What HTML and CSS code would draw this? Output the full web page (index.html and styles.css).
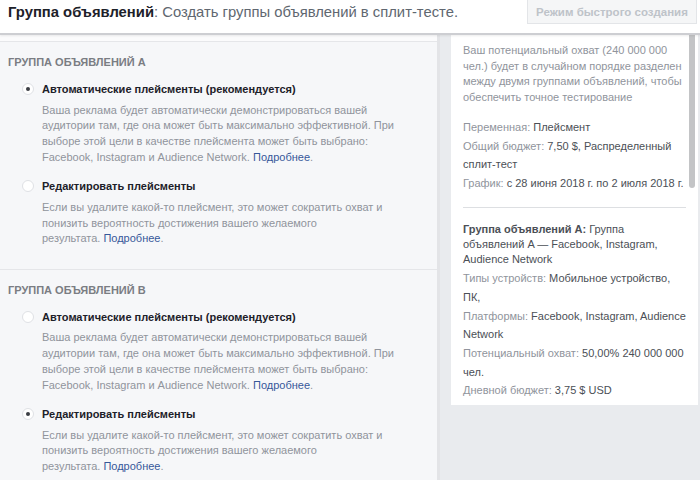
FILE: index.html
```html
<!DOCTYPE html>
<html lang="ru">
<head>
<meta charset="utf-8">
<link rel="stylesheet" href="styles.css">
</head>
<body>
<div class="page">
  <header class="topbar">
    <div class="title"><b>Группа объявлений</b>: Создать группы объявлений в сплит-тесте.</div>
    <button class="quick">Режим быстрого создания</button>
  </header>
  <div class="main">
    <div class="left">
      <div class="prev"></div>
      <section class="group">
        <h3 class="group-title">Группа объявлений A</h3>
        <div class="option">
          <span class="radio checked"></span>
          <div class="opt-body">
            <div class="opt-label">Автоматические плейсменты (рекомендуется)</div>
            <p class="opt-desc">Ваша реклама будет автоматически демонстрироваться вашей<br>аудитории там, где она может быть максимально эффективной. При<br>выборе этой цели в качестве плейсмента может быть выбрано:<br>Facebook, Instagram и Audience Network. <a class="link">Подробнее</a>.</p>
          </div>
        </div>
        <div class="option">
          <span class="radio"></span>
          <div class="opt-body">
            <div class="opt-label">Редактировать плейсменты</div>
            <p class="opt-desc">Если вы удалите какой-то плейсмент, это может сократить охват и<br>понизить вероятность достижения вашего желаемого<br>результата. <a class="link">Подробнее</a>.</p>
          </div>
        </div>
      </section>
      <section class="group">
        <h3 class="group-title">Группа объявлений B</h3>
        <div class="option">
          <span class="radio"></span>
          <div class="opt-body">
            <div class="opt-label">Автоматические плейсменты (рекомендуется)</div>
            <p class="opt-desc">Ваша реклама будет автоматически демонстрироваться вашей<br>аудитории там, где она может быть максимально эффективной. При<br>выборе этой цели в качестве плейсмента может быть выбрано:<br>Facebook, Instagram и Audience Network. <a class="link">Подробнее</a>.</p>
          </div>
        </div>
        <div class="option">
          <span class="radio checked"></span>
          <div class="opt-body">
            <div class="opt-label">Редактировать плейсменты</div>
            <p class="opt-desc">Если вы удалите какой-то плейсмент, это может сократить охват и<br>понизить вероятность достижения вашего желаемого<br>результата. <a class="link">Подробнее</a>.</p>
          </div>
        </div>
      </section>
    </div>
    <aside class="right">
      <div class="card">
        <div class="thumb"></div>
        <p class="intro">Ваш потенциальный охват (240 000 000<br>чел.) будет в случайном порядке разделен<br>между двумя группами объявлений, чтобы<br>обеспечить точное тестирование</p>
        <div class="rows">
          <div><span class="k">Переменная:</span> Плейсмент</div>
          <div><span class="k">Общий бюджет:</span> 7,50 $, Распределенный<br>сплит-тест</div>
          <div><span class="k">График:</span> с 28 июня 2018 г. по 2 июля 2018 г.</div>
        </div>
        <hr class="sep">
        <p class="grp"><b>Группа объявлений A:</b> Группа<br>объявлений A — Facebook, Instagram,<br>Audience Network</p>
        <div class="rows rows2">
          <div><span class="k">Типы устройств:</span> Мобильное устройство,<br>ПК,</div>
          <div><span class="k">Платформы:</span> Facebook, Instagram, Audience<br>Network</div>
          <div><span class="k">Потенциальный охват:</span> 50,00% 240 000 000<br>чел.</div>
          <div><span class="k">Дневной бюджет:</span> 3,75 $ USD</div>
        </div>
      </div>
    </aside>
  </div>
</div>
</body>
</html>
```
FILE: styles.css
```css
* { box-sizing: border-box; }
html, body { margin: 0; padding: 0; }
body {
  font-family: "Liberation Sans", Arial, sans-serif;
  font-size: 11px;
  color: #1d2129;
  background: #fff;
}
.page { width: 700px; height: 480px; overflow: hidden; display: flex; flex-direction: column; }

.topbar {
  height: 35px;
  flex: none;
  display: flex;
  align-items: flex-start;
  justify-content: space-between;
  background: #fff;
  border-bottom: 2px solid #cdced2;
  box-shadow: 0 1px 2px rgba(0,0,0,0.08);
  position: relative;
  z-index: 2;
}
.title {
  padding: 2px 0 0 8px;
  font-size: 14.8px;
  line-height: 20px;
  color: #606770;
}
.title b { color: #1d2129; }
.quick {
  margin: 0 3px 0 0;
  width: 170px;
  height: 24px;
  border: 1px solid #e3e5e8;
  border-top: none;
  background: #f5f6f7;
  color: #bec3c9;
  font-family: inherit;
  font-size: 11.5px;
  font-weight: bold;
  padding: 0;
}

.main { flex: 1; display: flex; min-height: 0; }
.left {
  width: 440px;
  flex: none;
  background: #f6f7f9;
  border-right: 3px solid #e3e4e7;
}
.prev { height: 7px; background: #fbfbfc; border-bottom: 1px solid #e5e6e9; }
.group { padding: 12px 0 22px 0; border-bottom: 1px solid #e5e6e9; }
.group-title {
  margin: 0 0 11px 8px;
  font-size: 11px;
  line-height: 16px;
  font-weight: bold;
  color: #7a7d83;
  text-transform: uppercase;
}
.option { display: flex; align-items: flex-start; margin-bottom: 13px; }
.option:last-child { margin-bottom: 0; }
.radio {
  flex: none;
  width: 12px;
  height: 12px;
  margin: 2px 8px 0 22px;
  border-radius: 50%;
  background: #fff;
  border: 1px solid #dfe1e5;
  display: flex;
  align-items: center;
  justify-content: center;
}
.radio.checked::after {
  content: "";
  width: 4px;
  height: 4px;
  border-radius: 50%;
  background: #3b3e44;
}
.opt-label { font-weight: bold; line-height: 16px; color: #1d2129; white-space: nowrap; }
.opt-desc {
  margin: 5.5px 0 0 0;
  line-height: 15.7px;
  color: #90949c;
  white-space: nowrap;
}
.link { color: #365899; }

.right {
  flex: 1;
  background: #e9ebee;
  padding: 0 3px 0 11px;
}
.card {
  position: relative;
  background: #fff;
  padding: 8px 12px 5px 12px;
}
.thumb {
  position: absolute;
  right: 3px;
  top: 0;
  width: 6px;
  height: 153px;
  border-radius: 0 0 3px 3px;
  background: #c3c4c6;
}
.intro { margin: 0; line-height: 15.7px; color: #90949c; white-space: nowrap; }
.rows { margin-top: 12.5px; line-height: 18.4px; color: #4b4f56; white-space: nowrap; }
.k { color: #90949c; }
.sep { border: none; border-top: 1px solid #dddfe2; margin: 15px 0 14px 0; }
.grp { margin: 0; line-height: 15px; color: #4b4f56; white-space: nowrap; }
.grp b { color: #4b4f56; }
.rows2 { margin-top: 2.5px; line-height: 18.67px; }
```
